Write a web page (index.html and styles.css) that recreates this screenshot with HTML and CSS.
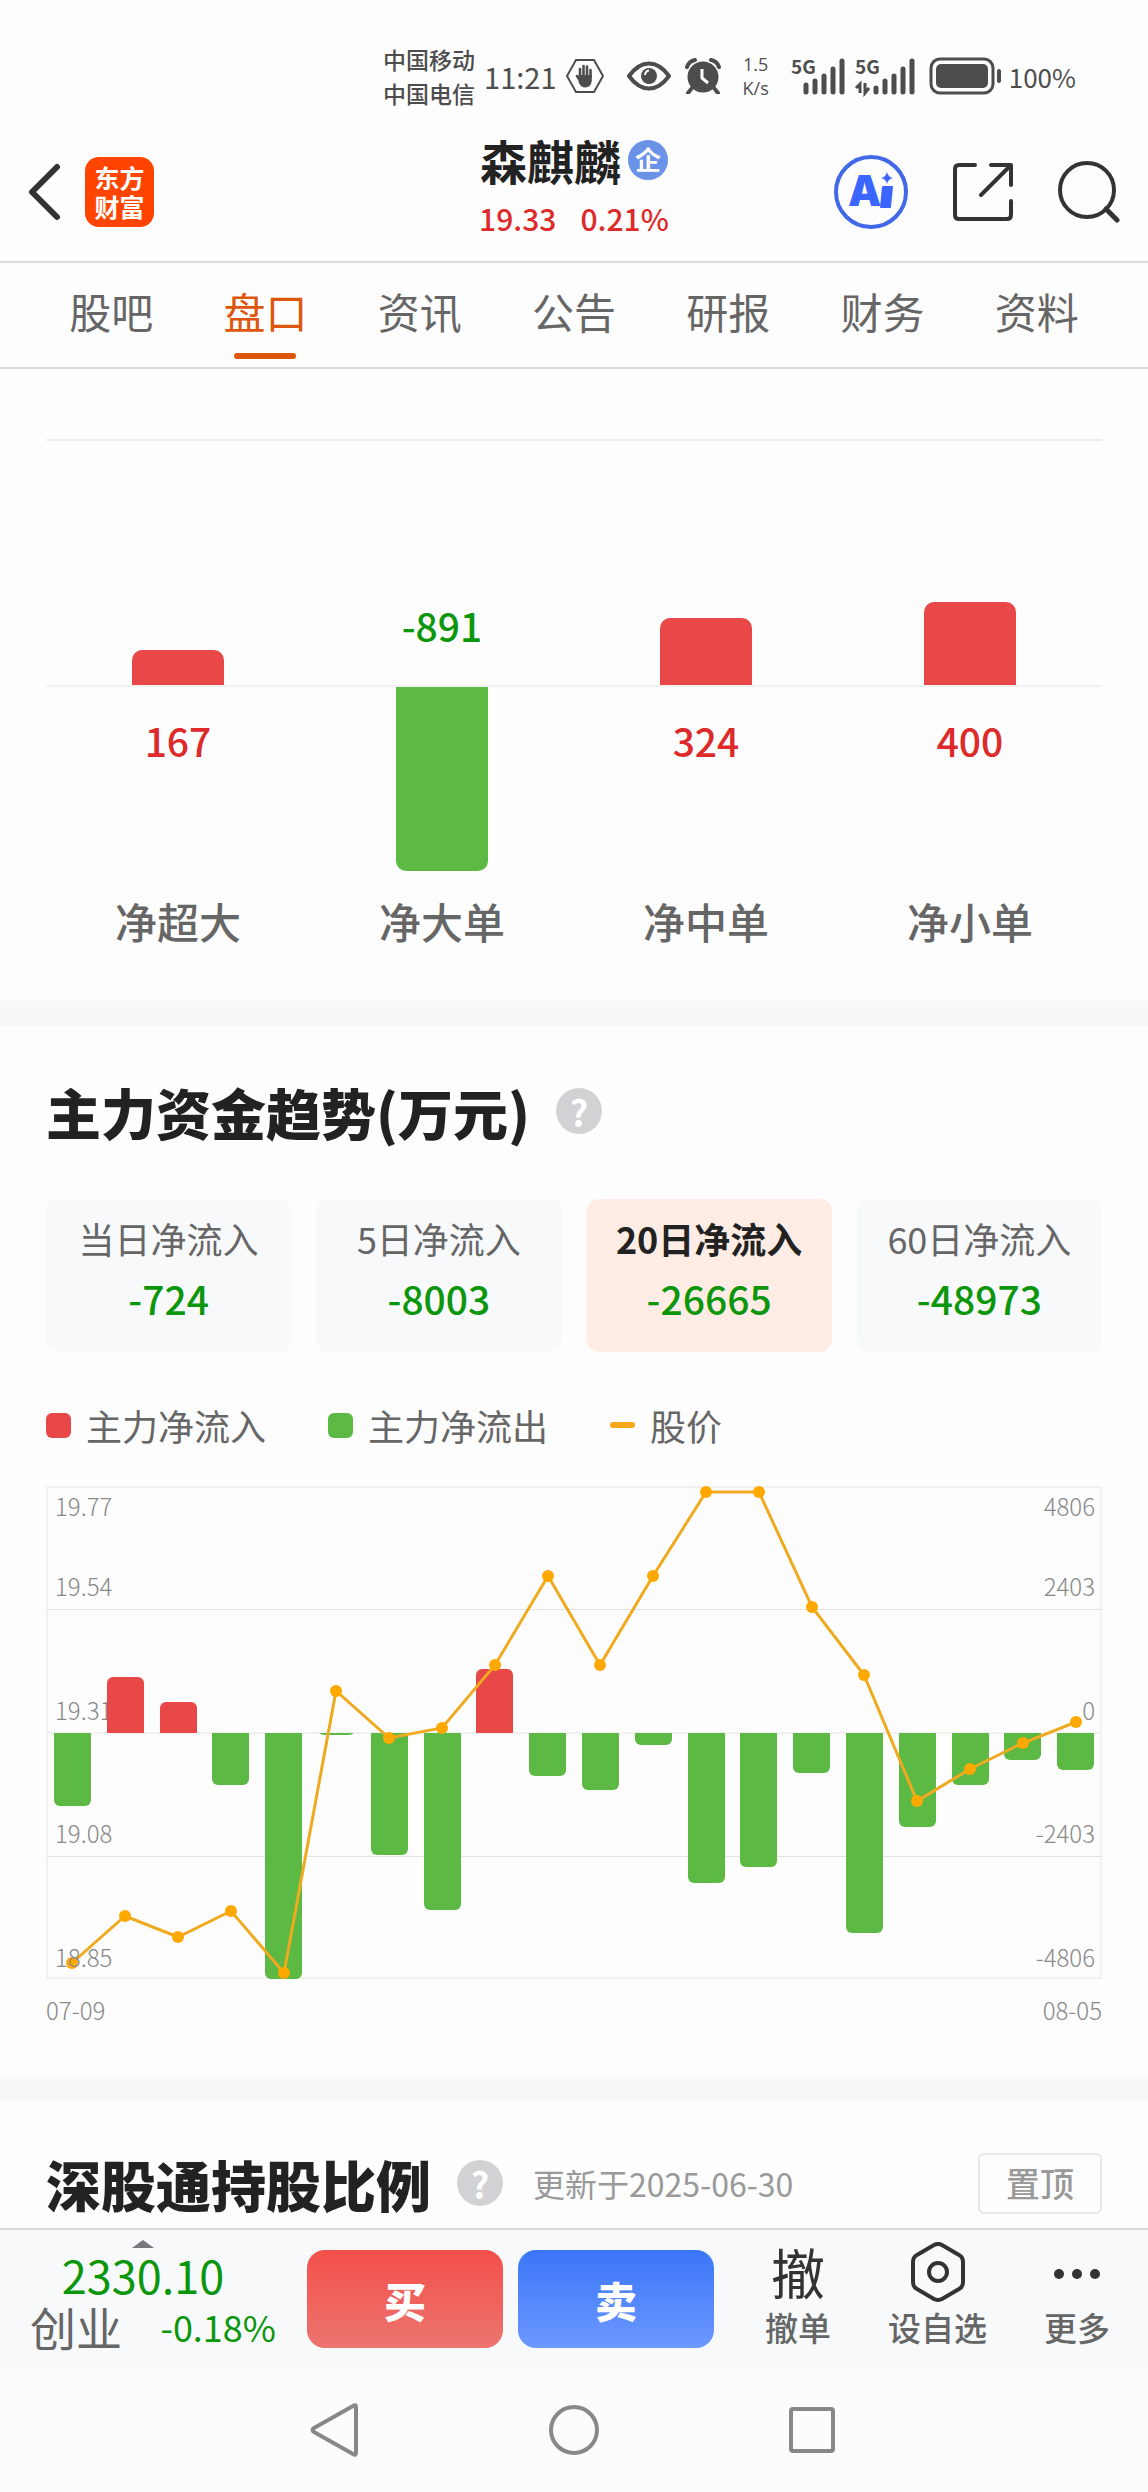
FILE: index.html
```
<!DOCTYPE html>
<html lang="zh-CN">
<head>
  <meta charset="UTF-8">
  <meta name="viewport" content="width=device-width, initial-scale=1.0">
  <title>森麒麟 - 盘口</title>
  <link rel="stylesheet" href="styles.css">
</head>
<body>
  <div class="status-bar">
    <div class="carrier"><span>中国移动</span><span>中国电信</span></div>
    <span class="clock">11:21</span>
    <svg class="st-hand" width="40" height="36" viewBox="0 0 40 36">
      <path d="M11 2h18l9 16-9 16H11L2 18z" fill="none" stroke="#4d4d4d" stroke-width="2"/>
      <path d="M15 19V11M18.500 18V8M22 18V8.500M25.500 19V12M12 18l4 6" stroke="#4d4d4d" stroke-width="2.600" stroke-linecap="round"/>
      <path d="M13.700 17h13.100v6q-1 6.500-6.500 6.500-4.500 0-6.600-5z" fill="#4d4d4d"/>
    </svg>
    <svg class="st-eye" width="44" height="30" viewBox="0 0 44 30">
      <path d="M2 15Q11 2.500 22 2.500T42 15Q33 27.500 22 27.500T2 15z" fill="none" stroke="#4d4d4d" stroke-width="4" stroke-linejoin="round"/>
      <circle cx="22" cy="15" r="8" fill="#4d4d4d"/>
      <path d="M18 14q.5-4 4-4.500" fill="none" stroke="#fff" stroke-width="2"/>
    </svg>
    <svg class="st-alarm" width="36" height="36" viewBox="0 0 36 36">
      <circle cx="18" cy="19" r="15.500" fill="#4d4d4d"/>
      <path d="M2 9q2-6 8-7M34 9q-2-6-8-7M7 30l-4 5M29 30l4 5" fill="none" stroke="#4d4d4d" stroke-width="4" stroke-linecap="round"/>
      <path d="M17 11v9l6 5" fill="none" stroke="#fff" stroke-width="3"/>
    </svg>
    <div class="speed"><span>1.5</span><span>K/s</span></div>
    <svg class="st-signal" width="54" height="38" viewBox="0 0 54 38">
      <text x="0" y="17" class="net">5G</text>
      <path d="M15 35v-7M24 35V24M33 35V19M42 35V12M51 35V4" stroke="#4d4d4d" stroke-width="5" stroke-linecap="round"/>
    </svg>
    <svg class="st-signal" width="60" height="38" viewBox="0 0 60 38">
      <text x="0" y="17" class="net">5G</text>
      <path d="M21 35v-4M30 35V24M39 35V19M48 35V12M57 35V4" stroke="#4d4d4d" stroke-width="5" stroke-linecap="round"/>
      <path d="M5 36V27l-4 4M10 26v10l4-5" fill="none" stroke="#4d4d4d" stroke-width="3"/>
    </svg>
    <svg class="st-battery" width="74" height="38" viewBox="0 0 74 38">
      <rect x="2" y="2" width="62" height="34" rx="9" fill="none" stroke="#4d4d4d" stroke-width="3"/>
      <rect x="7" y="7" width="52" height="24" rx="5" fill="#4d4d4d"/>
      <path d="M70 14v10" stroke="#4d4d4d" stroke-width="4" stroke-linecap="round"/>
    </svg>
    <span class="percent">100%</span>
  </div>

  <header class="header">
    <div class="header-left">
      <button class="icon-btn" aria-label="返回">
        <svg width="34" height="60" viewBox="0 0 34 60"><path d="M29 5L4 30l25 25" fill="none" stroke="#333" stroke-width="6" stroke-linecap="round" stroke-linejoin="round"/></svg>
      </button>
      <a href="#" class="logo"><span>东方</span><span>财富</span></a>
    </div>
    <div class="stock">
      <h1>森麒麟<span class="badge">企</span></h1>
      <p class="quote"><span>19.33</span><span>0.21%</span></p>
    </div>
    <div class="header-right">
      <button class="icon-btn" aria-label="AI">
        <svg width="74" height="74" viewBox="0 0 74 74">
          <circle cx="37" cy="37" r="35" fill="none" stroke="#4068e8" stroke-width="4"/>
          <text x="14" y="51" class="ai-text">A</text>
          <path d="M49 32h9l-2 20h-9z" fill="#3a66ff" stroke="#3a66ff" stroke-width="2" stroke-linejoin="round"/>
          <path d="M53 17q1 5 6 6-5 1-6 6-1-5-6-6 5-1 6-6z" fill="#3a66ff"/>
        </svg>
      </button>
      <button class="icon-btn" aria-label="分享">
        <svg width="60" height="60" viewBox="0 0 60 60"><path d="M22 3H6q-4 0-4 4v46q0 4 4 4h48q4 0 4-4V39M38 3h20v20M57 4L28 33" fill="none" stroke="#333" stroke-width="4" stroke-linecap="round" stroke-linejoin="round"/></svg>
      </button>
      <button class="icon-btn" aria-label="搜索">
        <svg width="62" height="62" viewBox="0 0 62 62"><circle cx="29" cy="29" r="27" fill="none" stroke="#333" stroke-width="4"/><path d="M48 48l11 11" stroke="#333" stroke-width="5" stroke-linecap="round"/></svg>
      </button>
    </div>
  </header>

  <nav class="tabs">
    <a href="#">股吧</a>
    <a href="#" class="active">盘口</a>
    <a href="#">资讯</a>
    <a href="#">公告</a>
    <a href="#">研报</a>
    <a href="#">财务</a>
    <a href="#">资料</a>
  </nav>

  <main>
    <section class="orders">
      <div class="order-chart">
        <div class="order">
          <div class="up"><div class="bar red" style="height:35px"></div></div>
          <div class="down"><span class="num red-text">167</span></div>
          <p>净超大</p>
        </div>
        <div class="order">
          <div class="up"><span class="num green-text">-891</span></div>
          <div class="down"><div class="bar green" style="height:184px"></div></div>
          <p>净大单</p>
        </div>
        <div class="order">
          <div class="up"><div class="bar red" style="height:67px"></div></div>
          <div class="down"><span class="num red-text">324</span></div>
          <p>净中单</p>
        </div>
        <div class="order">
          <div class="up"><div class="bar red" style="height:83px"></div></div>
          <div class="down"><span class="num red-text">400</span></div>
          <p>净小单</p>
        </div>
      </div>
    </section>

    <section class="trend">
      <div class="title-row">
        <h2>主力资金趋势(万元)</h2>
        <button class="help" aria-label="说明">?</button>
      </div>
      <div class="cards">
        <button class="card"><span>当日净流入</span><b>-724</b></button>
        <button class="card"><span>5日净流入</span><b>-8003</b></button>
        <button class="card selected"><span>20日净流入</span><b>-26665</b></button>
        <button class="card"><span>60日净流入</span><b>-48973</b></button>
      </div>
      <div class="legend">
        <span class="key"><i class="red"></i>主力净流入</span>
        <span class="key"><i class="green"></i>主力净流出</span>
        <span class="key"><i class="dash"></i>股价</span>
      </div>
      <svg class="trend-chart" viewBox="0 0 1056 494">
        <clipPath id="above"><rect x="0" y="0" width="1056" height="247"/></clipPath>
        <clipPath id="below"><rect x="0" y="247" width="1056" height="247"/></clipPath>
        <g fill="none" stroke="#f1f1f1" stroke-width="2">
          <rect x="1" y="1" width="1054" height="491"/>
          <path d="M0 247h1056"/>
        </g>
        <path d="M0 123.500h1056M0 370.500h1056" stroke="#e2e2e2"/>
        <g class="axis">
          <text x="9" y="30">19.77</text>
          <text x="9" y="110">19.54</text>
          <text x="9" y="234">19.31</text>
          <text x="9" y="357">19.08</text>
        </g>
        <g class="axis end">
          <text x="1049" y="30">4806</text>
          <text x="1049" y="110">2403</text>
          <text x="1049" y="234">0</text>
          <text x="1049" y="357">-2403</text>
          <text x="1049" y="481">-4806</text>
        </g>
        <!-- inflow -->
        <g fill="#e84848" clip-path="url(#above)">
          <rect x="61" y="191" width="37" height="70" rx="6"/>
          <rect x="114" y="216" width="37" height="50" rx="6"/>
          <rect x="430" y="183" width="37" height="80" rx="6"/>
        </g>
        <!-- outflow -->
        <g fill="#5bb944" clip-path="url(#below)">
          <rect x="8" y="227" width="37" height="93" rx="6"/>
          <rect x="166" y="227" width="37" height="72" rx="6"/>
          <rect x="219" y="227" width="37" height="266" rx="6"/>
          <rect x="272" y="227" width="37" height="22" rx="6"/>
          <rect x="325" y="227" width="37" height="142" rx="6"/>
          <rect x="378" y="227" width="37" height="197" rx="6"/>
          <rect x="483" y="227" width="37" height="63" rx="6"/>
          <rect x="536" y="227" width="37" height="77" rx="6"/>
          <rect x="589" y="227" width="37" height="32" rx="6"/>
          <rect x="642" y="227" width="37" height="170" rx="6"/>
          <rect x="694" y="227" width="37" height="154" rx="6"/>
          <rect x="747" y="227" width="37" height="60" rx="6"/>
          <rect x="800" y="227" width="37" height="220" rx="6"/>
          <rect x="853" y="227" width="37" height="114" rx="6"/>
          <rect x="906" y="227" width="37" height="72" rx="6"/>
          <rect x="958" y="227" width="37" height="47" rx="6"/>
          <rect x="1011" y="227" width="37" height="57" rx="6"/>
        </g>
        <!-- price -->
        <polyline fill="none" stroke="#efaa20" stroke-width="3" points="26,477 79,430 132,451 185,425 238,487 290,205 343,252 396,242 449,179 502,90 554,179 607,90 660,6 713,6 766,121 818,189 871,315 924,283 977,257 1030,236"/>
        <g fill="#ffa800">
          <circle cx="26" cy="477" r="6"/><circle cx="79" cy="430" r="6"/><circle cx="132" cy="451" r="6"/><circle cx="185" cy="425" r="6"/>
          <circle cx="238" cy="487" r="6"/><circle cx="290" cy="205" r="6"/><circle cx="343" cy="252" r="6"/><circle cx="396" cy="242" r="6"/>
          <circle cx="449" cy="179" r="6"/><circle cx="502" cy="90" r="6"/><circle cx="554" cy="179" r="6"/><circle cx="607" cy="90" r="6"/>
          <circle cx="660" cy="6" r="6"/><circle cx="713" cy="6" r="6"/><circle cx="766" cy="121" r="6"/><circle cx="818" cy="189" r="6"/>
          <circle cx="871" cy="315" r="6"/><circle cx="924" cy="283" r="6"/><circle cx="977" cy="257" r="6"/><circle cx="1030" cy="236" r="6"/>
        </g>
        <text x="9" y="481" class="axis">18.85</text>
      </svg>
      <div class="dates"><span>07-09</span><span>08-05</span></div>
    </section>

    <section class="holding">
      <div class="title-row">
        <h2>深股通持股比例</h2>
        <button class="help" aria-label="说明">?</button>
        <span class="updated">更新于2025-06-30</span>
        <button class="pin">置顶</button>
      </div>
    </section>
  </main>

  <footer class="trade-bar">
    <a href="#" class="index">
      <svg width="22" height="8" viewBox="0 0 22 8"><path d="M0 8L11 0l11 8z" fill="#77777c"/></svg>
      <span class="index-value">2330.10</span>
      <span class="index-row"><span class="index-name">创业</span><span class="index-change">-0.18%</span></span>
    </a>
    <button class="trade buy">买</button>
    <button class="trade sell">卖</button>
    <div class="actions">
      <button class="action"><span class="glyph">撤</span><span>撤单</span></button>
      <button class="action">
        <svg width="58" height="60" viewBox="0 0 58 60"><path d="M25 3q4-2 8 0l17 10q4 2 4 7v20q0 5-4 7L33 57q-4 2-8 0L8 47q-4-2-4-7V20q0-5 4-7z" fill="none" stroke="#333" stroke-width="4"/><circle cx="29" cy="30" r="9" fill="none" stroke="#333" stroke-width="4"/></svg>
        <span>设自选</span>
      </button>
      <button class="action">
        <svg width="58" height="60" viewBox="0 0 58 60" fill="#333"><circle cx="11" cy="32" r="5"/><circle cx="29" cy="32" r="5"/><circle cx="47" cy="32" r="5"/></svg>
        <span>更多</span>
      </button>
    </div>
  </footer>

  <div class="system-nav">
    <button class="icon-btn" aria-label="后退"><svg width="56" height="56" viewBox="0 0 56 56"><path d="M48 5v46q0 3-3 1L6 30q-3-2 0-4L45 4q3-2 3 1z" fill="none" stroke="#888" stroke-width="4" stroke-linejoin="round"/></svg></button>
    <button class="icon-btn" aria-label="主屏幕"><svg width="56" height="56" viewBox="0 0 56 56"><circle cx="28" cy="28" r="23" fill="none" stroke="#888" stroke-width="4"/></svg></button>
    <button class="icon-btn" aria-label="最近任务"><svg width="56" height="56" viewBox="0 0 56 56"><rect x="7" y="7" width="42" height="42" rx="2" fill="none" stroke="#888" stroke-width="4"/></svg></button>
  </div>
</body>
</html>
```

FILE: styles.css
```
* {
  box-sizing: border-box;
}
body {
  margin: 0;
  font-family: "Noto Sans CJK SC", sans-serif;
  background: #fdfdfd;
  color: #222;
}
h1, h2, p {
  margin: 0;
}
a {
  color: inherit;
  text-decoration: none;
}
button {
  font-family: inherit;
  border: none;
  padding: 0;
  background: none;
  color: inherit;
  cursor: pointer;
}
svg {
  display: block;
}
.icon-btn {
  display: block;
}

/* status bar */
.status-bar {
  display: flex;
  align-items: center;
  justify-content: flex-end;
  height: 110px;
  padding: 42px 72px 0 0;
  color: #4d4d4d;
}
.carrier {
  display: flex;
  flex-direction: column;
  font-size: 23px;
  line-height: 34px;
  font-weight: 500;
}
.clock {
  margin-left: 9px;
  font-size: 29px;
}
.percent {
  margin-left: 6px;
  font-size: 26px;
}
.st-hand {
  margin-left: 8px;
}
.st-eye {
  margin-left: 22px;
}
.st-alarm {
  margin-left: 14px;
}
.speed {
  display: flex;
  flex-direction: column;
  align-items: center;
  margin: 0 22px;
  font-family: "Open Sans", sans-serif;
  font-size: 18px;
  line-height: 24px;
}
.st-signal {
  margin-right: 10px;
  overflow: visible;
}
.net {
  font-size: 19px;
  font-weight: 700;
  fill: #4d4d4d;
}
.st-battery {
  margin-left: 4px;
}

/* header */
.header {
  display: grid;
  grid-template-columns: 1fr auto 1fr;
  align-items: center;
  height: 153px;
  padding: 12px 28px 0;
  border-bottom: 2px solid #dcdcdc;
}
.header-left {
  display: flex;
  align-items: center;
  gap: 23px;
}
.logo {
  display: flex;
  flex-direction: column;
  align-items: center;
  justify-content: center;
  width: 69px;
  height: 70px;
  border-radius: 14px;
  background: #ff4400;
  color: #fff;
  font-size: 25px;
  line-height: 29px;
  font-weight: 700;
}
.stock {
  padding-bottom: 8px;
  text-align: center;
}
.stock h1 {
  display: flex;
  align-items: center;
  justify-content: center;
  gap: 7px;
  font-size: 47px;
  line-height: 60px;
  font-weight: 700;
}
.badge {
  width: 40px;
  height: 40px;
  border-radius: 50%;
  background: #6a93e8;
  color: #fff;
  font-size: 26px;
  line-height: 38px;
}
.quote {
  display: flex;
  justify-content: center;
  gap: 24px;
  color: #dd2a2a;
  font-size: 30px;
  line-height: 56px;
  font-weight: 500;
}
.header-right {
  display: flex;
  align-items: center;
  justify-content: flex-end;
  gap: 45px;
}
.ai-text {
  font-family: Inter, sans-serif;
  font-size: 42px;
  font-weight: 900;
  fill: #3a66ff;
}

/* tabs */
.tabs {
  display: flex;
  height: 106px;
  padding: 0 34px;
  border-bottom: 2px solid #dcdcdc;
}
.tabs a {
  position: relative;
  flex: 1;
  text-align: center;
  font-size: 42px;
  line-height: 96px;
  color: #666;
}
.tabs .active {
  color: #dd560e;
}
.tabs .active::after {
  content: "";
  position: absolute;
  left: 50%;
  bottom: 8px;
  width: 62px;
  margin-left: -31px;
  height: 6px;
  border-radius: 3px;
  background: #dd560e;
}

/* order size bars */
.red {
  background: #e84848;
}
.green {
  background: #5bb944;
}
.red-text {
  color: #dd2a2a;
}
.green-text {
  color: #0c960c;
}
.orders {
  padding: 70px 46px 48px;
  border-bottom: 25px solid #f7f8fa;
}
.order-chart {
  display: flex;
  border-top: 2px solid #ececec;
}
.order {
  flex: 1;
  text-align: center;
}
.order .up, .order .down {
  display: flex;
  flex-direction: column;
  align-items: center;
}
.order .up {
  justify-content: flex-end;
  height: 246px;
  border-bottom: 2px solid #f1f1f1;
}
.order .down {
  height: 184px;
}
.bar {
  width: 92px;
}
.up .bar {
  border-radius: 10px 10px 0 0;
}
.down .bar {
  border-radius: 0 0 10px 10px;
}
.num {
  font-size: 39px;
  line-height: 56px;
  font-weight: 500;
}
.up .num {
  margin-bottom: 32px;
}
.down .num {
  margin-top: 25px;
}
.order p {
  padding-top: 18px;
  font-size: 42px;
  line-height: 64px;
  font-weight: 500;
  color: #666;
}

/* capital trend */
.title-row {
  display: flex;
  align-items: center;
}
.title-row h2 {
  font-size: 55px;
  line-height: 80px;
  font-weight: 900;
}
.help {
  width: 46px;
  height: 46px;
  margin-left: 26px;
  border-radius: 50%;
  background: #d2d2d4;
  color: #fff;
  font-size: 36px;
  line-height: 46px;
  font-weight: 700;
}
.trend {
  padding: 45px 46px 45px;
  border-bottom: 25px solid #f7f8fa;
}
.cards {
  display: grid;
  grid-template-columns: repeat(4, 1fr);
  gap: 25px;
  margin-top: 48px;
}
.card {
  display: flex;
  flex-direction: column;
  align-items: center;
  height: 153px;
  padding-top: 11px;
  border-radius: 12px;
  background: #f8f9fb;
  font-size: 36px;
  line-height: 56px;
  color: #666;
}
.card b {
  font-size: 39px;
  line-height: 64px;
  font-weight: 500;
  color: #0c960c;
}
.card.selected {
  background: #ffede5;
}
.card.selected span {
  color: #222;
  font-weight: 700;
}
.legend {
  display: flex;
  gap: 62px;
  margin-top: 45px;
}
.key {
  display: flex;
  align-items: center;
  gap: 15px;
  font-size: 36px;
  line-height: 56px;
  color: #666;
}
.key i {
  width: 25px;
  height: 25px;
  border-radius: 6px;
}
.key .dash {
  height: 6px;
  border-radius: 3px;
  background: #f5a818;
}
.trend-chart {
  width: 100%;
  margin-top: 33px;
}
.axis {
  font-size: 24px;
  font-weight: 300;
  fill: #888;
}
.end {
  text-anchor: end;
}
.dates {
  display: flex;
  justify-content: space-between;
  margin-top: 10px;
  font-size: 24px;
  line-height: 40px;
  font-weight: 300;
  color: #888;
}

/* holding ratio */
.holding {
  padding: 43px 46px 5px;
}
.updated {
  margin-left: 30px;
  font-size: 32px;
  color: #999;
}
.pin {
  width: 124px;
  height: 61px;
  margin-left: auto;
  border: 2px solid #e8e8e8;
  border-radius: 6px;
  font-size: 34px;
  line-height: 56px;
  font-weight: 500;
  color: #999;
}

/* trade bar */
.trade-bar {
  display: flex;
  align-items: center;
  gap: 15px;
  height: 140px;
  padding: 0 18px 0 30px;
  border-top: 2px solid #dcdcdc;
  background: #f7f9fb;
}
.index {
  display: flex;
  flex-direction: column;
  align-items: center;
  width: 262px;
  padding: 0 16px 8px 0;
}
.index svg, .index-value {
  margin-right: 20px;
}
.index-value {
  font-size: 45px;
  line-height: 54px;
  color: #0c960c;
}
.index-row {
  display: flex;
  align-items: center;
  justify-content: space-between;
  width: 100%;
  line-height: 48px;
}
.index-name {
  font-size: 46px;
  color: #666;
}
.index-change {
  font-size: 36px;
  color: #0c960c;
}
.trade {
  width: 196px;
  height: 98px;
  border-radius: 18px;
  color: #fff;
  font-size: 42px;
  font-weight: 900;
}
.buy {
  background: linear-gradient(#f4504a, #ec746f);
}
.sell {
  background: linear-gradient(#3a76f8, #6c98ff);
}
.actions {
  flex: 1;
  display: flex;
  justify-content: space-between;
  padding: 0 20px 4px 36px;
}
.action {
  display: flex;
  flex-direction: column;
  align-items: center;
  font-size: 33px;
  line-height: 50px;
  font-weight: 500;
  color: #666;
}
.glyph {
  font-size: 54px;
  line-height: 60px;
  font-weight: 400;
  color: #333;
}

/* android keys */
.system-nav {
  display: flex;
  align-items: center;
  justify-content: center;
  gap: 182px;
  height: 124px;
  background: #fcfcfc;
}
```
